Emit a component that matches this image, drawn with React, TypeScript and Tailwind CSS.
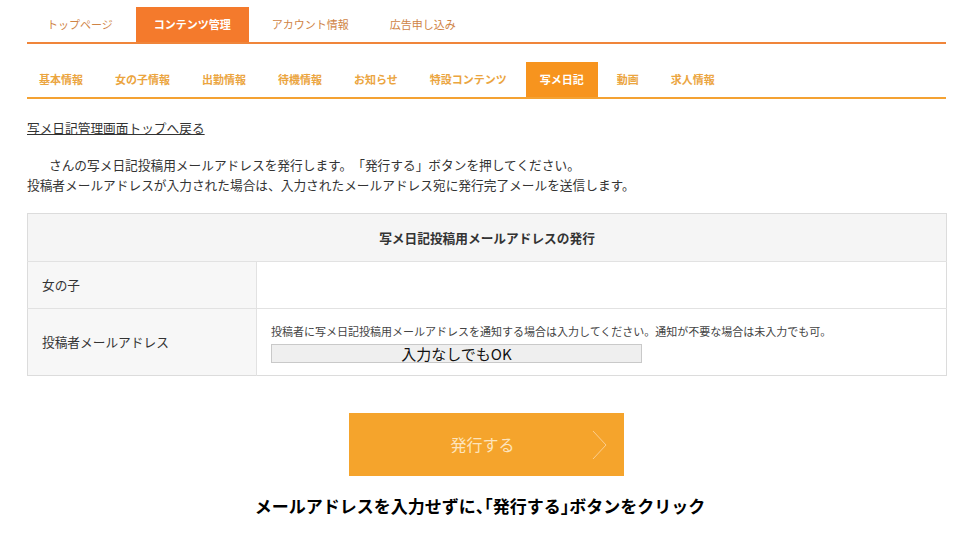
import React from "react";

const topTabs = ["トップページ", "コンテンツ管理", "アカウント情報", "広告申し込み"];
const subTabs = ["基本情報", "女の子情報", "出勤情報", "待機情報", "お知らせ", "特設コンテンツ", "写メ日記", "動画", "求人情報"];

export default function App() {
  return (
    <div className="w-[960px] h-[540px] overflow-hidden bg-white [font-family:'Noto_Sans_CJK_JP','Noto_Sans',sans-serif] text-[#333]">
      <div className="ml-[27px] w-[919px]">
        {/* top nav */}
        <div className="pt-[7px] border-b-2 border-[#f0853a]">
          <div className="flex gap-[5px] pl-[2px]">
            {topTabs.map((t) => {
              const active = t === "コンテンツ管理";
              return (
                <div
                  key={t}
                  className={
                    active
                      ? "h-[35px] px-[18px] flex items-center text-[11px] leading-none bg-[#f47a2c] text-white font-bold"
                      : "h-[35px] px-[18px] flex items-center text-[11px] leading-none text-[#cf8446]"
                  }
                >
                  {t}
                </div>
              );
            })}
          </div>
        </div>

        {/* sub nav */}
        <div className="mt-[18px] border-b-2 border-[#f4a233]">
          <div className="flex gap-[6px] ml-[-1px]">
            {subTabs.map((t) => {
              const active = t === "写メ日記";
              return (
                <div
                  key={t}
                  className={
                    active
                      ? "h-[35px] px-[14px] flex items-center text-[11px] leading-none font-bold bg-[#f7941e] text-white"
                      : "h-[35px] px-[13px] flex items-center text-[11px] leading-none font-bold text-[#eba53f]"
                  }
                >
                  {t}
                </div>
              );
            })}
          </div>
        </div>

        {/* back link */}
        <div className="mt-[20px] text-[12.7px] leading-[18px]">
          <a href="#" className="underline text-[#333]">写メ日記管理画面トップへ戻る</a>
        </div>

        {/* description */}
        <div className="mt-[18px] text-[12.7px] leading-[20px] [text-spacing-trim:space-all]">
          <p className="pl-[22px]">さんの写メ日記投稿用メールアドレスを発行します。「発行する」ボタンを押してください。</p>
          <p>投稿者メールアドレスが入力された場合は、入力されたメールアドレス宛に発行完了メールを送信します。</p>
        </div>

        {/* table */}
        <table className="mt-[18px] w-[920px] border-collapse border border-[#dcdcdc] text-[12.7px]">
          <tbody>
            <tr className="h-[48px]">
              <th colSpan={2} className="bg-[#f5f5f5] font-bold text-center border-b border-[#e2e2e2] text-[#333]">
                写メ日記投稿用メールアドレスの発行
              </th>
            </tr>
            <tr className="h-[47px]">
              <td className="w-[229px] bg-[#f7f7f7] pl-[14px] border-r border-b border-[#e2e2e2]">女の子</td>
              <td className="bg-white border-b border-[#e2e2e2]"></td>
            </tr>
            <tr className="h-[67px]">
              <td className="w-[229px] bg-[#f7f7f7] pl-[14px] border-r border-[#e2e2e2]">投稿者メールアドレス</td>
              <td className="bg-white pl-[14px] pt-[14px] pb-[12px] align-top">
                <div className="text-[11px] leading-[17px] text-[#444]">
                  投稿者に写メ日記投稿用メールアドレスを通知する場合は入力してください。通知が不要な場合は未入力でも可。
                </div>
                <div className="mt-[4px] w-[371px] h-[19px] bg-[#efefef] border border-[#c9c9c9] flex items-center justify-center text-[15px] leading-none text-[#111]">
                  入力なしでもOK
                </div>
              </td>
            </tr>
          </tbody>
        </table>

        {/* button */}
        <div className="mt-[37px] flex justify-center">
          <div className="relative w-[275px] h-[63px] bg-[#f5a42c] flex items-center justify-center">
            <span className="text-[16px] leading-none text-[#fde4bd] mr-[8px] mb-[2px]">発行する</span>
            <svg className="absolute left-[242px] top-[17px]" width="18" height="30" viewBox="0 0 18 30">
              <path d="M2 1 L15 15 L2 29" fill="none" stroke="#fbd29a" strokeWidth="0.9" />
            </svg>
          </div>
        </div>
      </div>

      {/* caption */}
      <div className="mt-[18px] text-center text-[17px] leading-[24px] font-bold text-black [text-spacing-trim:space-all]">
        メールアドレスを入力せずに<span className="[font-feature-settings:'halt']">、「</span>発行する<span className="[font-feature-settings:'halt']">」</span>ボタンをクリック
      </div>
    </div>
  );
}
